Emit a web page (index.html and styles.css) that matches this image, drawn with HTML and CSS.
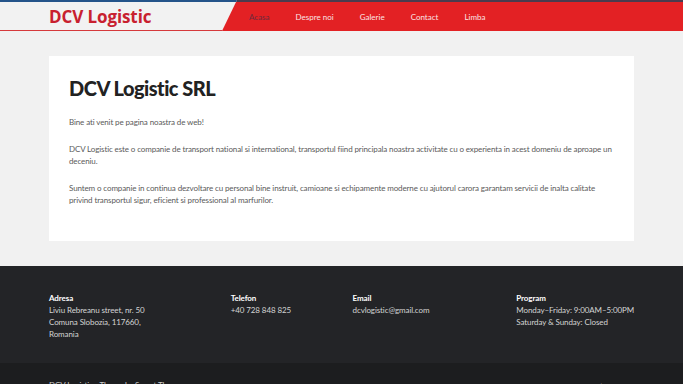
FILE: index.html
```html
<!DOCTYPE html>
<html lang="ro">
<head>
    <meta charset="UTF-8">
    <meta name="viewport" content="width=device-width, initial-scale=1.0">
    <title>DCV Logistic</title>
    <link rel="stylesheet" href="styles.css">
</head>
<body>
    <header class="header">
        <div class="brand">
            <a class="logo" href="#">DCV Logistic</a>
        </div>
        <nav class="nav">
            <a href="#" class="active">Acasa</a>
            <a href="#">Despre noi</a>
            <a href="#">Galerie</a>
            <a href="#">Contact</a>
            <a href="#">Limba</a>
        </nav>
    </header>

    <main class="content">
        <article class="card">
            <h1>DCV Logistic SRL</h1>
            <p>Bine ati venit pe pagina noastra de web!</p>
            <p>DCV Logistic este o companie de transport national si international, transportul fiind principala noastra activitate cu o experienta in acest domeniu de aproape un deceniu.</p>
            <p>Suntem o companie in continua dezvoltare cu personal bine instruit, camioane si echipamente moderne cu ajutorul carora garantam servicii de inalta calitate privind transportul sigur, eficient si professional al marfurilor.</p>
        </article>
    </main>

    <footer class="footer">
        <div class="footer-cols">
            <div class="col col-address">
                <h4>Adresa</h4>
                <p>Liviu Rebreanu street, nr. 50<br>Comuna Slobozia, 117660,<br>Romania</p>
            </div>
            <div class="col col-phone">
                <h4>Telefon</h4>
                <p>+40 728 848 825</p>
            </div>
            <div class="col col-email">
                <h4>Email</h4>
                <p>dcvlogistic@gmail.com</p>
            </div>
            <div class="col col-program">
                <h4>Program</h4>
                <p>Monday–Friday: 9:00AM–5:00PM<br>Saturday &amp; Sunday: Closed</p>
            </div>
        </div>
        <div class="bottom-bar">
            <span>DCV Logistic - Theme by Sweet Themes</span>
            <span class="up">&#9650;</span>
        </div>
    </footer>
</body>
</html>
```

FILE: styles.css
```css
body {
    margin: 0;
    padding: 0;
    background-color: #f1f1f1;
    font-family: Lato, "Noto Sans", sans-serif;
    color: #555;
}
a {
    text-decoration: none;
}
.header {
    display: flex;
    height: 31px;
    background-color: #e32124;
    border-top: 2px solid #4a3b4e;
    box-sizing: border-box;
}
.brand {
    width: 237px;
    margin-top: -2px;
    height: 31px;
    box-sizing: border-box;
    background-color: #f2f2f2;
    border-top: 2px solid #24548a;
    border-bottom: 1px solid #d63a3c;
    clip-path: polygon(0 0, 100% 0, calc(100% - 15px) 100%, 0 100%);
    padding-left: 49px;
    display: flex;
    align-items: center;
}
.logo {
    font-family: "Open Sans", sans-serif;
    font-weight: 700;
    font-size: 17px;
    color: #c8202f;
    letter-spacing: -0.1px;
}
.nav {
    display: flex;
    align-items: center;
    gap: 26px;
    padding-left: 12px;
    font-size: 8px;
}
.nav a {
    color: #fbe3e3;
}
.nav a.active {
    color: #6e2a3c;
}
.content {
    padding: 25px 49px 25px;
}
.card {
    background-color: #fff;
    padding: 18px 20px 35px;
}
.card h1 {
    margin: 0 0 14px;
    font-size: 20px;
    font-weight: 900;
    color: #222;
    line-height: 28px;
    letter-spacing: -0.5px;
}
.card p {
    margin: 0 0 15px;
    font-size: 8px;
    line-height: 12px;
    color: #5a5a5a;
    letter-spacing: -0.12px;
}
.card p:last-child {
    margin-bottom: 0;
}
.footer {
    background-color: #232427;
    color: #d4d4d4;
    font-size: 8px;
    line-height: 12px;
    letter-spacing: -0.1px;
}
.footer-cols {
    display: flex;
    padding: 26px 49px 24px;
    height: 97px;
    box-sizing: border-box;
}
.col h4 {
    margin: 0;
    color: #fff;
    font-weight: 700;
    font-size: 8px;
}
.col p {
    margin: 0;
    white-space: nowrap;
}
.col-address { width: 182px; }
.col-phone { width: 122px; }
.col-email { width: 164px; }
.bottom-bar {
    background-color: #1c1d1f;
    display: flex;
    justify-content: space-between;
    padding: 16px 78px 10px 49px;
    color: #ccc;
}
.up {
    font-size: 8px;
}
```
